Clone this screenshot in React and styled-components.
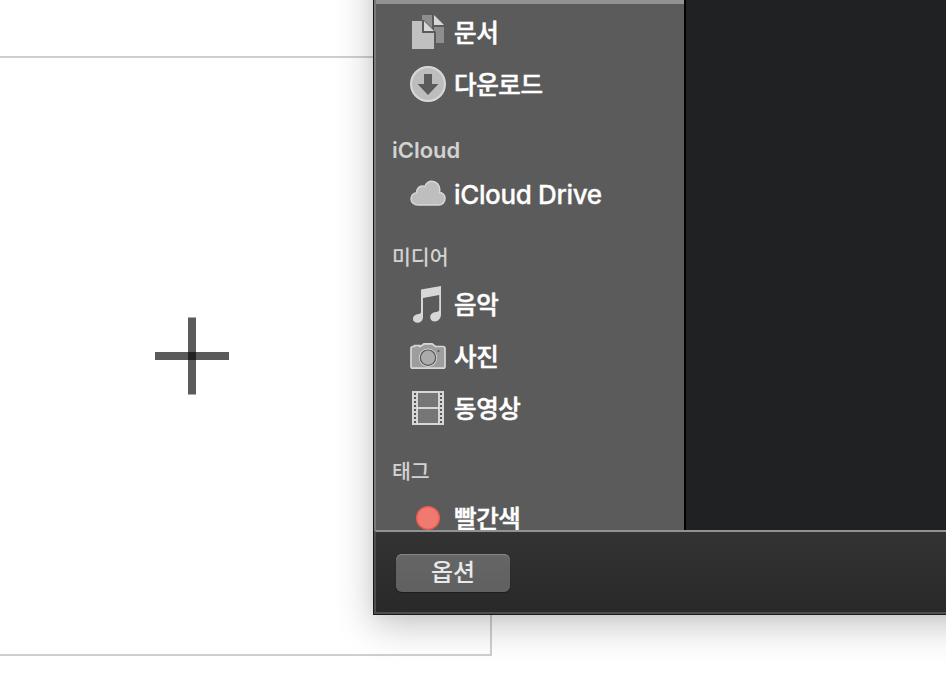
import React from 'react';
import styled, { createGlobalStyle } from 'styled-components';

const GlobalStyle = createGlobalStyle`
  * { box-sizing: border-box; }
  body { margin: 0; background: #fff; overflow: hidden; font-family: Inter, "Noto Sans CJK KR", sans-serif; }
`;

const Page = styled.main`
  position: relative;
  width: 946px;
  height: 678px;
  padding-top: 56px;
  overflow: hidden;
  background: #fff;
`;

const UploadTile = styled.section`
  width: 492px;
  height: 600px;
  border: 2px solid #cfcfcf;
  border-left: 0;
  padding: 259px 0 0 155px;
`;

const PlusIcon = styled.svg`
  display: block;
`;

const Dialog = styled.section`
  position: absolute;
  left: 373px;
  top: -60px;
  width: 700px;
  height: 675px;
  display: flex;
  flex-direction: column;
  border: 1px solid #191919;
  box-shadow: 0 10px 36px rgba(0, 0, 0, 0.24), 0 0 12px rgba(0, 0, 0, 0.05);
`;

const Browser = styled.div`
  height: 589px;
  display: flex;
  overflow: hidden;
  border-left: 2px solid #797979;
`;

const Sidebar = styled.nav`
  width: 308px;
  padding-top: 59px;
  background: #5b5b5b;
  overflow: hidden;
`;

const SelectedRow = styled.div`
  height: 4px;
  margin-bottom: 2px;
  background: #929292;
`;

const FileArea = styled.div`
  flex: 1;
  border-left: 2px solid #000;
  background: #1f2122;
`;

const Heading = styled.h2`
  height: 58px;
  margin: 0;
  padding: ${({ $top }) => $top}px 0 0 ${({ $left }) => $left || 16}px;
  color: #d2d2d2;
  font-size: ${({ $size }) => $size}px;
  font-weight: ${({ $weight }) => $weight || 500};
  line-height: 32px;
  letter-spacing: ${({ $track }) => $track || 0}px;
`;

const Row = styled.div`
  height: 52px;
  display: flex;
  align-items: center;
  padding-left: 34px;
`;

const IconSlot = styled.span`
  width: 40px;
  height: 40px;
  flex: none;
  display: block;
  margin-right: 4px;

  svg { display: block; }
`;

const Label = styled.span`
  color: #fff;
  font-size: ${({ $size }) => $size || 24.5}px;
  font-weight: 500;
  line-height: 36px;
  letter-spacing: ${({ $track }) => $track ?? -0.4}px;
  white-space: nowrap;
  padding-top: 2px;
  -webkit-text-stroke: ${({ $stroke }) => $stroke ?? 0.5}px #fff;
`;

const Footer = styled.footer`
  height: 84px;
  padding: 22px 20px;
  border: 2px solid #4e4e4e;
  border-top-color: #929292;
  background: linear-gradient(#333, #292929);
  background-clip: padding-box;
`;

const OptionButton = styled.button`
  width: 114px;
  height: 38px;
  display: block;
  padding: 0 0 4px;
  border: 0;
  border-radius: 6px;
  background: linear-gradient(#666, #606060);
  box-shadow: inset 0 1px #858585, 0 1px 1px #1c1c1c;
  color: #e9e9e9;
  font: 500 24px/34px "Noto Sans CJK KR", sans-serif;
  letter-spacing: 0;
`;

function Icon({ children }) {
  return <IconSlot><svg width="40" height="40" viewBox="0 0 40 40">{children}</svg></IconSlot>;
}

const DocumentsIcon = () => (
  <Icon>
    <path d="M12 3h10v28H24V19L12 9z" fill="#8e8e8e" />
    <path d="M24 15h10v16h-10z" fill="#8e8e8e" />
    <path d="M24 3v10h10z" fill="#d7d7d7" />
    <path d="M11 8h3l12 12v12h-2V21H12V9h-1z" fill="#5b5b5b" />
    <path d="M2 9h10v12h12v16H2z" fill="#c0c0c0" />
    <path d="M14 9v10h10z" fill="#d7d7d7" />
  </Icon>
);

const DownloadIcon = () => (
  <Icon>
    <circle cx="18" cy="20" r="17" fill="#bdbdbd" stroke="#d9d9d9" strokeWidth="2" />
    <path d="M14 10h8v10h6.5L18 31 7.5 20H14z" fill="#5b5b5b" />
  </Icon>
);

const CloudIcon = () => (
  <Icon>
    <path d="M8 31C4 31 1 28.4 1 24.8c0-3.2 2.3-5.7 5.5-6C6.7 14.5 9.3 12 12.3 12c1 0 1.8.3 2.4.7C16 9.6 18.5 7.2 21.8 7.2c4.6 0 8 3.9 8 8.4 0 1-.1 2-.4 2.9 3.4.2 5.6 2.8 5.6 6 0 3.8-2.7 6.5-6.3 6.5z" fill="#bebebe" stroke="#d7d7d7" strokeWidth="1.5" />
  </Icon>
);

const MusicIcon = () => (
  <Icon>
    <path d="M11 5.5 31 2v28.5c0 4.2-3.1 7-6.2 7-2.8 0-4.6-1.8-4.6-4.2 0-3 2.3-4.7 5.8-5.2 2.2-.3 3.2-.8 3.2-2.5V11L13 14v18.7c0 4.1-2.7 6-5.9 6-2.5 0-4.1-1.5-4.1-3.6 0-3 2.4-4.6 5.6-5.1 2-.4 2.4-1 2.4-2.8z" fill="#d7d7d7" />
  </Icon>
);

const CameraIcon = () => (
  <Icon>
    <path d="M1 12.5q0-2 2-2h1.5V9.5h5v1h1L14 7.8h8l3.5 2.7H33q2 0 2 2v18q0 1.7-2 1.7H3q-2 0-2-1.7z" fill="#9d9d9d" stroke="#d7d7d7" strokeWidth="1.7" />
    <circle cx="18" cy="21.7" r="9.2" fill="#d7d7d7" />
    <circle cx="18" cy="21.7" r="7.7" fill="#ababab" stroke="#555" strokeWidth="1.2" />
    <circle cx="28.5" cy="15" r="1" fill="#555" />
  </Icon>
);

const FilmIcon = () => (
  <Icon>
    <path d="M2 3h32v34H2z" fill="#d7d7d7" />
    <path d="M8 5h20v14H8zm0 16h20v14H8z" fill="#767676" />
    {[5, 9, 13, 17, 21, 25, 29, 33].map((y) => (
      <path key={y} d={`M4 ${y}h2v2H4zm26 0h2v2h-2z`} fill="#555" />
    ))}
  </Icon>
);

const RedTagIcon = () => (
  <Icon><circle cx="18" cy="20" r="11.3" fill="#f17a70" stroke="#ee5c50" strokeWidth="1.5" /></Icon>
);

export default function App() {
  return (
    <>
      <GlobalStyle />
      <Page>
        <UploadTile>
          <PlusIcon width="74" height="78" viewBox="0 0 74 78" aria-label="추가">
            <path d="M0 35h74v8H0zM33 .6h8V35h-8zM33 43h8v34.4h-8z" fill="#5b5b5b" />
            <path d="M33 35h8v8h-8z" fill="#222" />
          </PlusIcon>
        </UploadTile>
        <Dialog>
          <Browser>
            <Sidebar>
              <SelectedRow />
              <Row><DocumentsIcon /><Label>문서</Label></Row>
              <Row><DownloadIcon /><Label>다운로드</Label></Row>
              <Heading $top={24} $size={22} $weight={600} $track={0}>iCloud</Heading>
              <Row><CloudIcon /><Label $size={26} $track={-0.35} $stroke={0.3}>iCloud Drive</Label></Row>
              <Heading $top={22} $size={20.5}>미디어</Heading>
              <Row><MusicIcon /><Label>음악</Label></Row>
              <Row><CameraIcon /><Label>사진</Label></Row>
              <Row><FilmIcon /><Label>동영상</Label></Row>
              <Heading $top={22} $size={20.5}>태그</Heading>
              <Row><RedTagIcon /><Label>빨간색</Label></Row>
            </Sidebar>
            <FileArea />
          </Browser>
          <Footer><OptionButton type="button">옵션</OptionButton></Footer>
        </Dialog>
      </Page>
    </>
  );
}
